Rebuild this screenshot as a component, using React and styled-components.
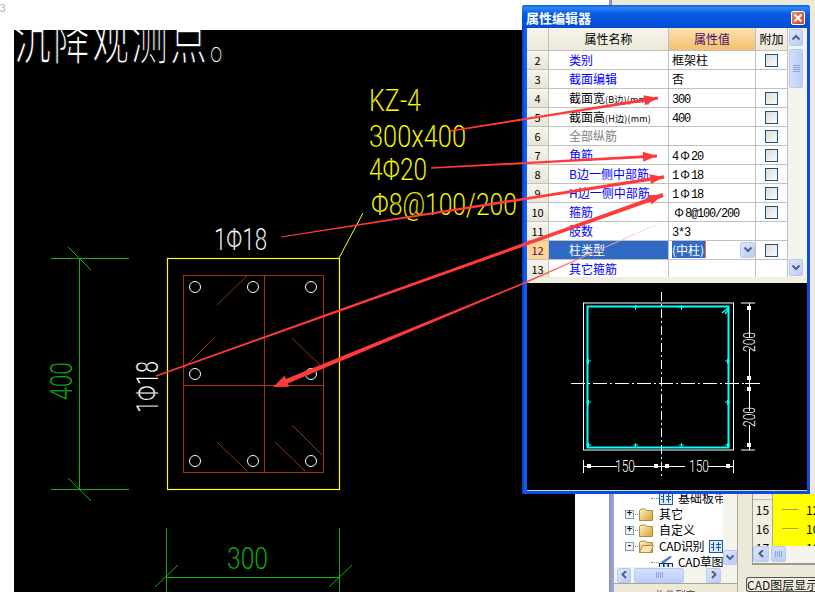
import React from 'react';
import styled, { createGlobalStyle } from 'styled-components';

const GlobalStyle = createGlobalStyle`
  html, body {
    margin: 0;
    padding: 0;
    background: #fff;
    font-family: "Noto Sans CJK SC", "Liberation Sans", sans-serif;
  }
`;

const CJK = '"Noto Sans CJK SC", "Liberation Sans", sans-serif';

const Page = styled.div`
  position: relative;
  display: flex;
  width: 815px;
  height: 592px;
  overflow: hidden;
  background: #fff;
`;

/* left: the pasted CAD picture */
const LeftPane = styled.div`
  display: flex;
  flex-direction: column;
  width: 609px;
  flex: none;
`;
const PageNumber = styled.div`
  height: 30px;
  flex: none;
  font: 10px/17px "Liberation Sans", sans-serif;
  color: #b0b0b0;
`;
const Canvas = styled.svg`
  display: block;
  width: 561px;
  height: 562px;
  margin-left: 14px;
  background: #000;
`;
const CadLabel = styled.text`
  font-family: "Roboto", "Liberation Sans", sans-serif;
  font-weight: 300;
  font-size: 32px;
  fill: ${(p) => p.$color || '#fff'};
  stroke: #000;
  stroke-width: 0.15px;
`;
const CadNote = styled.text`
  font-family: ${CJK};
  font-size: 37px;
  letter-spacing: 2px;
  fill: #fff;
  stroke: #000;
  stroke-width: 1px;
`;

/* right: the application behind the dialog */
const RightPane = styled.div`
  display: flex;
  flex-direction: column;
  flex: 1;
  background: #ece9d8;
`;
const BehindDialog = styled.div`
  display: flex;
  justify-content: flex-end;
  height: 494px;
  flex: none;
  border-left: 3px solid #8c93cd;
`;
const RightStrip = styled.div`
  display: flex;
  flex-direction: column;
  width: 5px;
  overflow: hidden;
  font: bold 11px/17px "Liberation Sans", sans-serif;
  color: #000;
`;
const StripPart = styled.div`
  height: ${(p) => p.$h}px;
  flex: none;
  overflow: hidden;
  white-space: nowrap;
  background: ${(p) => p.$bg || '#fff'};
  border-bottom: ${(p) => (p.$line ? `1px solid ${p.$line}` : 'none')};
  box-sizing: border-box;
`;
const StripLetter = styled.div`
  height: 18px;
`;
const BelowDialog = styled.div`
  display: flex;
  flex: 1;
  min-height: 0;
`;
const Sash = styled.div`
  width: 5px;
  flex: none;
  background: linear-gradient(90deg, #8c93cd, #9fa8dc);
`;
const TreeColumn = styled.div`
  display: flex;
  flex-direction: column;
  width: 124px;
  flex: none;
  border-right: 1px solid #a9a79a;
  box-sizing: border-box;
`;
const TreeBody = styled.div`
  display: grid;
  grid-template-columns: 109px 14px;
  grid-template-rows: 73px 16px;
  flex: none;
  background: #fff;
  border-bottom: 1px solid #a9a79a;
`;
const TreeList = styled.div`
  overflow: hidden;
  background: #fff;
  font: 12px/16px ${CJK};
  color: #000;
`;
const TreeRow = styled.div`
  position: relative;
  display: flex;
  align-items: center;
  gap: 5px;
  height: 16px;
  margin-top: ${(p) => (p.$first ? -4 : 0)}px;
  padding-left: ${(p) => (p.$leaf ? 45 : 11)}px;
  white-space: nowrap;

  &::before {
    content: '';
    position: absolute;
    left: ${(p) => (p.$leaf ? 37 : 15)}px;
    top: 8px;
    width: ${(p) => (p.$leaf ? 8 : 9)}px;
    border-top: 1px dotted #888;
  }
`;
const CadName = styled.span`
  letter-spacing: -0.4px;
`;
const Expander = styled.span`
  position: relative;
  z-index: 1;
  width: 7px;
  height: 7px;
  flex: none;
  border: 1px solid #7f9db9;
  background: #f4f4ee;
  font: bold 9px/7px "Liberation Mono", monospace;
  text-align: center;
  color: #000;
`;
const TreeCorner = styled.div`
  background: #f5f4ec;
  display: flex;
  flex-direction: column;
  justify-content: flex-end;
  padding-bottom: 2px;
`;
const ScrollBtn = styled.div`
  display: flex;
  align-items: center;
  justify-content: center;
  width: ${(p) => p.$w || 14}px;
  height: ${(p) => p.$h || 15}px;
  flex: none;
  box-sizing: border-box;
  border: 1px solid #b6c8f4;
  border-radius: 2px;
  background: linear-gradient(135deg, #dde6fd, #b9cbf8);
`;
const HScroll = styled.div`
  display: flex;
  align-items: center;
  gap: ${(p) => p.$gap || 3}px;
  padding-left: ${(p) => p.$pad || 0}px;
  background: #f5f4ec;
`;
const ScrollGap = styled.span`
  width: 16px;
  flex: none;
`;
const Thumb = styled.div`
  display: flex;
  align-items: center;
  justify-content: center;
  width: ${(p) => p.$w || 16}px;
  height: ${(p) => p.$h || 15}px;
  flex: none;
  box-sizing: border-box;
  border: 1px solid #b6c8f4;
  border-radius: 2px;
  background: linear-gradient(#d3e0fd, #bccdf8);
`;
const Grip = styled.span`
  width: 7px;
  height: 6px;
  background: repeating-linear-gradient(90deg, #8ba3d8 0 1px, transparent 1px 2px);
`;
const TreeFooter = styled.div`
  flex: 1;
  overflow: hidden;
  font: 10px/22px ${CJK};
  text-align: center;
  color: #444;
`;
const GridColumn = styled.div`
  display: flex;
  flex-direction: column;
  flex: 1;
  min-width: 0;
  padding-left: 8px;
`;
const SheetBox = styled.div`
  margin-left: 6px;
  height: 71px;
  flex: none;
  overflow: hidden;
  background: #f5f4ec;
  border-bottom: 2px solid #9d9b8e;
  border-left: 1px solid #9d9b8e;
  box-sizing: border-box;
`;
const SheetRows = styled.div`
  height: 52px;
  overflow: hidden;
  background: #ffff00;
`;
const SheetRow = styled.div`
  display: grid;
  grid-template-columns: 20px 9px 1fr;
  height: 19px;
  margin-top: ${(p) => (p.$first ? -13 : 0)}px;
  font: 12px/19px ${CJK};
  color: #000;
`;
const SheetNo = styled.div`
  background: #f1efe2;
  border-bottom: 1px solid #bdbdb5;
  border-right: 1px solid #a9a79a;
  text-align: center;
`;
const SheetTick = styled.div`
  position: relative;
  padding-left: 24px;
  white-space: nowrap;
  overflow: hidden;

  &::before {
    content: '';
    position: absolute;
    left: 0;
    top: 9px;
    width: 16px;
    border-top: 1px solid #a0a060;
  }
`;
const SheetCell = styled.div`
  background: #ffff00;
`;
const LayerButton = styled.div`
  margin-top: 12px;
  width: 80px;
  height: 13px;
  border: 1px solid #555;
  border-radius: 3px 0 0 3px;
  border-right: none;
  background: #f1efe2;
  font: 12px/13px ${CJK};
  white-space: nowrap;
  color: #111;
`;

/* the floating property dialog */
const Dialog = styled.div`
  position: absolute;
  left: 522px;
  top: 5px;
  display: flex;
  flex-direction: column;
  width: 288px;
  height: 489px;
  box-sizing: border-box;
  padding: 0 3px 3px 5px;
  background: linear-gradient(90deg, #0831d9 0, #166aee 4px, #0a4be0 5px, #0a4be0 100%);
  border-radius: 3px 3px 0 0;
`;
const TitleBar = styled.div`
  display: flex;
  align-items: center;
  justify-content: space-between;
  height: 23px;
  flex: none;
  margin: 0 -3px 0 -5px;
  padding: 2px 5px 0 4px;
  box-sizing: border-box;
  background: linear-gradient(#0a5be6, #2b86f5 12%, #0858e4 40%, #0350d8 90%, #0a48c8);
  border-radius: 3px 3px 0 0;
  font: bold 13px/16px ${CJK};
  color: #fff;
`;
const CloseBtn = styled.div`
  display: flex;
  align-items: center;
  justify-content: center;
  width: 14px;
  height: 14px;
  box-sizing: border-box;
  border: 1px solid #fff;
  border-radius: 2px;
  background: linear-gradient(135deg, #eb8a6e, #d2401c);
`;
const PropsPane = styled.div`
  display: flex;
  height: 255px;
  flex: none;
  box-sizing: border-box;
  padding-bottom: 6px;
  background: #f1efe2;
`;
const PropGrid = styled.div`
  display: grid;
  grid-template-columns: 22px 120px 87px 32px;
  grid-template-rows: 23px repeat(12, 19px);
  height: 249px;
  width: 261px;
  flex: none;
  overflow: hidden;
  background: #fff;
  font: 12px/18px ${CJK};
`;
const Cell = styled.div`
  position: relative;
  box-sizing: border-box;
  border-right: 1px solid #c0c0c0;
  border-bottom: 1px solid #c0c0c0;
  white-space: nowrap;
  overflow: hidden;
`;
const HeadCell = styled(Cell)`
  line-height: 22px;
  text-align: center;
  color: ${(p) => (p.$value ? '#4b0a6e' : '#000')};
  background: ${(p) =>
    p.$value ? 'linear-gradient(#fbe3ae, #f3c06e)' : 'linear-gradient(#f7f5ec, #ece9d8)'};
`;
const NumCell = styled(Cell)`
  text-align: center;
  font-size: 11px;
  color: ${(p) => (p.$active ? '#4b0a6e' : '#000')};
  background: ${(p) => (p.$active ? '#ffd58f' : 'linear-gradient(#f7f5ec, #e8e5d6)')};
`;
const NameCell = styled(Cell)`
  padding-left: 20px;
  color: ${(p) => (p.$active ? '#fff' : p.$color || '#0000ff')};
  background: ${(p) => (p.$active ? '#316ac5' : '#fff')};
`;
const ValueCell = styled(Cell)`
  padding-left: 3px;
  color: #000;
`;
const AddCell = styled(Cell)`
  display: flex;
  align-items: center;
  justify-content: center;
`;
const Small = styled.span`
  font-size: 9px;
  letter-spacing: 0.2px;
`;
const Digits = styled.span`
  font-family: "Liberation Mono", monospace;
  font-size: 12px;
  letter-spacing: -1.2px;
`;
const Steel = styled.span`
  display: inline-block;
  width: 10px;
  margin: 0 1px 0 2px;
  text-align: center;
  font-size: 12px;
`;
const Selected = styled.span`
  padding-right: 1px;
  background: #316ac5;
  border-right: 1px solid #e8821e;
  color: #fff;
`;
const CheckBox = styled.span`
  width: 13px;
  height: 13px;
  box-sizing: border-box;
  border: 1.5px solid #1c5180;
  background: linear-gradient(135deg, #dcdcd7, #fbfbf9);
`;
const CellDrop = styled(ScrollBtn)`
  position: absolute;
  right: 0;
  top: 1px;
`;
const VScroll = styled.div`
  display: flex;
  flex-direction: column;
  justify-content: space-between;
  width: 19px;
  height: 249px;
  flex: none;
  box-sizing: border-box;
  padding: 1px 4px 1px 1px;
  background: #f5f4ec;
`;
const VTrack = styled.div`
  display: flex;
  flex-direction: column;
  gap: 3px;
`;
const VThumb = styled(Thumb)`
  width: 14px;
  height: 39px;
  background: linear-gradient(90deg, #d3e0fd, #bccdf8);
`;
const VGrip = styled.span`
  width: 7px;
  height: 7px;
  background: repeating-linear-gradient(#8ba3d8 0 1px, transparent 1px 2px);
`;
const Preview = styled.svg`
  display: block;
  width: 280px;
  height: 207px;
  flex: none;
  background: #000;
`;
const DialogEdge = styled.div`
  height: 1px;
  flex: none;
  background: #d8d4c6;
`;
const DimLabel = styled.text`
  font-family: "Roboto", "Liberation Sans", sans-serif;
  font-weight: 300;
  font-size: 16px;
  fill: #fff;
`;

const Overlay = styled.svg`
  position: absolute;
  left: 0;
  top: 0;
  width: 815px;
  height: 592px;
  pointer-events: none;
`;

const Chevron = ({ dir = 'down' }) => {
  const rot = { down: 0, up: 180, left: 90, right: -90 }[dir];
  return (
    <svg width="10" height="8" viewBox="0 0 10 8">
      <path
        d="M1.5 1.5 5 5l3.5-3.5"
        fill="none"
        stroke="#4d6185"
        strokeWidth="2"
        transform={`rotate(${rot} 5 3.5)`}
      />
    </svg>
  );
};

const CloseGlyph = () => (
  <svg width="10" height="10" viewBox="0 0 10 10">
    <path d="M1.5 1.5l7 7M8.5 1.5l-7 7" stroke="#fff" strokeWidth="2.2" />
  </svg>
);

const Folder = ({ open }) => (
  <svg width="15" height="13" viewBox="0 0 15 13" style={{ flex: 'none' }}>
    <defs>
      <linearGradient id="folderFill" x1="0" y1="0" x2="1" y2="1">
        <stop offset="0" stopColor="#fff3c4" />
        <stop offset="1" stopColor="#d8a02c" />
      </linearGradient>
    </defs>
    <path d="M.5 2.5 2 1h4l1.5 1.5h6v10H.5z" fill="url(#folderFill)" stroke="#a88a50" />
    {open && <path d="M.5 12.5 3.5 5.5h11l-3 7z" fill="#fbe6a8" stroke="#a88a50" />}
  </svg>
);

const BlueBoard = ({ w = 14, h = 13 }) => (
  <svg width={w} height={h} viewBox="0 0 14 13" style={{ flex: 'none' }}>
    <rect x=".5" y=".5" width="13" height="12" fill="#dbe8f8" stroke="#1c5a9c" />
    <path d="M4.5 2v9M9.5 2v9M2 4.5h2.5M2 7.5h2.5M7 4.5h5M7 7.5h5" stroke="#1c5a9c" />
  </svg>
);

const CadSketchIcon = () => (
  <svg width="14" height="12" viewBox="0 0 14 12" style={{ flex: 'none' }}>
    <path d="M2 6 11 0l2 1-9 7z" fill="#3f78c8" />
    <path d="M0 7h14v5H0z" fill="#12305c" />
    <path d="M1 8h3v3H1zM5.500 8h3v3h-3zM10 8h3v3h-3z" fill="#dbe8f8" />
  </svg>
);

const rows = [
  { no: 2, name: '类别', value: '框架柱', check: true },
  { no: 3, name: '截面编辑', value: '否' },
  { no: 4, name: <>截面宽<Small>(B边)(mm)</Small></>, color: '#000', value: <Digits>300</Digits>, check: true },
  { no: 5, name: <>截面高<Small>(H边)(mm)</Small></>, color: '#000', value: <Digits>400</Digits>, check: true },
  { no: 6, name: '全部纵筋', color: '#808080', value: '', check: true },
  { no: 7, name: '角筋', value: <><Digits>4</Digits><Steel>Φ</Steel><Digits>20</Digits></>, check: true },
  { no: 8, name: 'B边一侧中部筋', value: <><Digits>1</Digits><Steel>Φ</Steel><Digits>18</Digits></>, check: true },
  { no: 9, name: 'H边一侧中部筋', value: <><Digits>1</Digits><Steel>Φ</Steel><Digits>18</Digits></>, check: true },
  { no: 10, name: '箍筋', value: <><Steel>Φ</Steel><Digits>8@100/200</Digits></>, check: true },
  { no: 11, name: '肢数', value: <Digits>3*3</Digits> },
  { no: 12, name: '柱类型', active: true, value: <Selected>(中柱)</Selected>, check: true },
  { no: 13, name: '其它箍筋', value: '' },
];

const taper = (x1, y1, x2, y2, w1, w2) => {
  const len = Math.hypot(x2 - x1, y2 - y1);
  const nx = -(y2 - y1) / len;
  const ny = (x2 - x1) / len;
  return [
    [x1 + (nx * w1) / 2, y1 + (ny * w1) / 2],
    [x2 + (nx * w2) / 2, y2 + (ny * w2) / 2],
    [x2 - (nx * w2) / 2, y2 - (ny * w2) / 2],
    [x1 - (nx * w1) / 2, y1 - (ny * w1) / 2],
  ]
    .map((p) => p.join(','))
    .join(' ');
};

const head = (tx, ty, fx, fy, len = 14, half = 5) => {
  const d = Math.hypot(fx - tx, fy - ty);
  const ux = (fx - tx) / d;
  const uy = (fy - ty) / d;
  const bx = tx + ux * len;
  const by = ty + uy * len;
  return `${tx},${ty} ${bx - uy * half},${by + ux * half} ${bx + uy * half},${by - ux * half}`;
};

const arrows = [
  { from: [450, 131], to: [658, 98], w1: 1.5, w2: 3 },
  { from: [431, 168], to: [657, 156], w1: 1.5, w2: 3 },
  { from: [281, 237], to: [664, 177], w1: 1.2, w2: 3.5 },
  { from: [156, 376], to: [663, 195], w1: 1.5, w2: 4 },
];

const rebarDots = [
  [195, 287], [253, 287], [311, 287], [195, 374],
  [311, 374], [195, 461], [253, 461], [311, 461],
];
const stirrupTicks = [
  [247, 276, 217, 305], [214, 338, 184, 368], [292, 338, 322, 367],
  [217, 442, 247, 471], [275, 442, 305, 471], [292, 425, 322, 455],
];
const cyanTicks = [
  [635, 307], [681, 307], [588, 361], [588, 402], [727, 361], [727, 402],
  [635, 445], [681, 445], [727, 445], [588, 445],
];
const dimSquares = [
  [589, 466], [656, 466], [667, 466], [728, 466],
  [749, 308], [749, 378], [749, 389], [749, 445],
];
const GREEN = '#10b010';
const YELLOW = '#ffff00';

const DrawingCanvas = () => (
  <Canvas viewBox="14 30 561 562">
    <CadNote transform="translate(14 59) scale(1 1.5)">沉降观测点。</CadNote>
    <CadLabel x="369" y="111" $color={YELLOW} textLength="52" lengthAdjust="spacingAndGlyphs">KZ-4</CadLabel>
    <CadLabel x="369" y="147" $color={YELLOW} textLength="97" lengthAdjust="spacingAndGlyphs">300x400</CadLabel>
    <CadLabel x="369" y="180" $color={YELLOW} textLength="58" lengthAdjust="spacingAndGlyphs">4Φ20</CadLabel>
    <CadLabel x="371" y="215" $color={YELLOW} textLength="146" lengthAdjust="spacingAndGlyphs">Φ8@100/200</CadLabel>
    <CadLabel x="214" y="250" textLength="53" lengthAdjust="spacingAndGlyphs">1Φ18</CadLabel>
    <CadLabel x="0" y="0" transform="translate(158 413) rotate(-90)" textLength="52" lengthAdjust="spacingAndGlyphs">1Φ18</CadLabel>
    <CadLabel x="0" y="0" transform="translate(72 400) rotate(-90)" $color={GREEN} textLength="38" lengthAdjust="spacingAndGlyphs">400</CadLabel>
    <CadLabel x="227" y="569" $color={GREEN} textLength="41" lengthAdjust="spacingAndGlyphs">300</CadLabel>

    <rect x="167.500" y="258.500" width="172" height="231" fill="none" stroke={YELLOW} strokeWidth="1.200" />
    <path d="M339 258 363 213" stroke={YELLOW} fill="none" />
    <rect x="183.500" y="275.500" width="140" height="197" fill="none" stroke="#a83200" />
    <path d="M264.500 275v197M183 385.500h140" stroke="#a83200" fill="none" />
    {stirrupTicks.map(([a, b, c, d]) => (
      <line key={`${a}-${b}`} x1={a} y1={b} x2={c} y2={d} stroke="#8e3a00" />
    ))}
    {rebarDots.map(([cx, cy]) => (
      <circle key={`${cx}-${cy}`} cx={cx} cy={cy} r="5.500" fill="none" stroke="#fff" />
    ))}

    <g stroke={GREEN} fill="none">
      <path d="M79.500 258v231M51 258.500h78M51 489.500h78M68 247l23 23M68 478l23 23" />
      <path d="M166.500 528v64M339.500 528v64M166 577.500h173M155 587l23-22M329 587l23-22" />
    </g>
  </Canvas>
);

const SectionPreview = () => (
  <Preview viewBox="527 283 280 207">
    <rect x="583.500" y="303" width="150" height="147" fill="none" stroke="#fff" />
    <rect x="587.500" y="306.500" width="141" height="141" fill="none" stroke="#00ffff" strokeWidth="2" />
    <path d="M722 313l6-5M725 314l4-5" stroke="#00ffff" strokeWidth="1.500" />
    {cyanTicks.map(([x, y]) => (
      <path key={`${x}-${y}`} d={`M${x - 2} ${y}h5M${x + 0.5} ${y - 2}v5`} stroke="#00ffff" />
    ))}
    <g stroke="#fff" fill="none">
      <path d="M661.500 292V479" strokeDasharray="9 3 2 3" />
      <path d="M571 383.500H760" strokeDasharray="14 3 2 3" />
      <path d="M749.500 303v34M749.500 349v62M749.500 425v25M741 303h14M741 450h14M745 383.500h9" />
      <path d="M583.500 460v13M733.500 460v13M583 466.500h34M634 466.500h51M708 466.500h26" />
    </g>
    {dimSquares.map(([x, y]) => (
      <rect key={`${x}-${y}`} x={x - 2} y={y - 2} width="4" height="4" fill="#fff" />
    ))}
    <DimLabel x="615" y="472" textLength="20" lengthAdjust="spacingAndGlyphs">150</DimLabel>
    <DimLabel x="689" y="472" textLength="20" lengthAdjust="spacingAndGlyphs">150</DimLabel>
    <DimLabel transform="translate(755 352) rotate(-90)" textLength="20" lengthAdjust="spacingAndGlyphs">200</DimLabel>
    <DimLabel transform="translate(755 427) rotate(-90)" textLength="20" lengthAdjust="spacingAndGlyphs">200</DimLabel>
  </Preview>
);

const PropertyDialog = () => (
  <Dialog>
    <TitleBar>
      属性编辑器
      <CloseBtn><CloseGlyph /></CloseBtn>
    </TitleBar>
    <PropsPane>
      <PropGrid>
        <HeadCell />
        <HeadCell>属性名称</HeadCell>
        <HeadCell $value>属性值</HeadCell>
        <HeadCell>附加</HeadCell>
        {rows.map((r) => (
          <React.Fragment key={r.no}>
            <NumCell $active={r.active}>{r.no}</NumCell>
            <NameCell $active={r.active} $color={r.color}>{r.name}</NameCell>
            <ValueCell>
              {r.value}
              {r.active && <CellDrop $w={15} $h={16}><Chevron /></CellDrop>}
            </ValueCell>
            <AddCell>{r.check && <CheckBox />}</AddCell>
          </React.Fragment>
        ))}
      </PropGrid>
      <VScroll>
        <VTrack>
          <ScrollBtn $h={17}><Chevron dir="up" /></ScrollBtn>
          <VThumb><VGrip /></VThumb>
        </VTrack>
        <ScrollBtn $h={17}><Chevron /></ScrollBtn>
      </VScroll>
    </PropsPane>
    <SectionPreview />
    <DialogEdge />
  </Dialog>
);

const BackgroundStrip = () => (
  <RightStrip>
    <StripPart $h={33} $bg="#ece9d8" $line="#a9a79a" />
    <StripPart $h={43} $line="#a9a79a">✕</StripPart>
    <StripPart $h={22} $bg="#ece9d8" />
    <StripPart $h={3} $bg="#8ba3c8" />
    <StripPart $h={171}>
      <StripLetter>三</StripLetter>
      {Array.from({ length: 9 }).map((_, i) => <StripLetter key={i}>K</StripLetter>)}
    </StripPart>
    <StripPart $h={2} $bg="#e8a040" />
    <StripPart $h={46} $line="#a9a79a">
      <div>|</div>
      <div>▾</div>
    </StripPart>
    <StripPart $h={27} $bg="linear-gradient(#f6d8b8, #f0b888)" />
    {['口', 'M', 'M', '装', '', '图', '', '国'].map((t, i) => (
      <StripPart key={i} $h={19} $bg="#ffff00" $line="#b8b8a8">{t}</StripPart>
    ))}
  </RightStrip>
);

const ProjectTree = () => (
  <TreeColumn>
    <TreeBody>
      <TreeList>
        <TreeRow $leaf $first><BlueBoard /><span>基础板带</span></TreeRow>
        <TreeRow><Expander>+</Expander><Folder /><span>其它</span></TreeRow>
        <TreeRow><Expander>+</Expander><Folder /><span>自定义</span></TreeRow>
        <TreeRow>
          <Expander>-</Expander><Folder open /><CadName>CAD识别</CadName><BlueBoard />
        </TreeRow>
        <TreeRow $leaf><CadSketchIcon /><CadName>CAD草图</CadName></TreeRow>
      </TreeList>
      <TreeCorner>
        <ScrollBtn $h={15}><Chevron /></ScrollBtn>
      </TreeCorner>
      <HScroll $pad={3} $gap={3}>
        <ScrollBtn><Chevron dir="left" /></ScrollBtn>
        <Thumb $w={50}><Grip /></Thumb>
        <ScrollGap />
        <ScrollBtn $w={15}><Chevron dir="right" /></ScrollBtn>
      </HScroll>
      <TreeCorner />
    </TreeBody>
    <TreeFooter>构件列表</TreeFooter>
  </TreeColumn>
);

const LayerSheet = () => (
  <GridColumn>
    <SheetBox>
      <SheetRows>
        <SheetRow $first><SheetNo /><SheetCell /><SheetCell /></SheetRow>
        <SheetRow><SheetNo>15</SheetNo><SheetCell /><SheetTick>12</SheetTick></SheetRow>
        <SheetRow><SheetNo>16</SheetNo><SheetCell /><SheetTick>10</SheetTick></SheetRow>
        <SheetRow><SheetNo>17</SheetNo><SheetCell /><SheetTick>10</SheetTick></SheetRow>
      </SheetRows>
      <HScroll $gap={2}>
        <ScrollBtn $w={16} $h={16}><Chevron dir="left" /></ScrollBtn>
        <Thumb $w={15} $h={16}><Grip /></Thumb>
      </HScroll>
    </SheetBox>
    <LayerButton>CAD图层显示</LayerButton>
  </GridColumn>
);

const Arrows = () => (
  <Overlay viewBox="0 0 815 592">
    <defs>
      <linearGradient id="fadeTail" gradientUnits="userSpaceOnUse" x1="520" y1="285" x2="660" y2="223">
        <stop offset="0" stopColor="#ff3a3a" />
        <stop offset="1" stopColor="#ffdada" />
      </linearGradient>
    </defs>
    {arrows.map(({ from, to, w1, w2 }) => (
      <g key={from.join()} fill="#ff3a3a">
        <polygon points={taper(from[0], from[1], to[0], to[1], w1, w2)} />
        <polygon points={head(to[0], to[1], from[0], from[1])} />
      </g>
    ))}
    <polygon points={taper(285, 382, 522, 284, 5, 1.5)} fill="#ff3a3a" />
    <polygon points={head(273, 387, 522, 284, 15, 6)} fill="#ff3a3a" />
    <polygon points={taper(522, 284, 660, 223, 1.5, 0.5)} fill="url(#fadeTail)" />
  </Overlay>
);

const App = () => (
  <Page>
    <GlobalStyle />
    <LeftPane>
      <PageNumber>3</PageNumber>
      <DrawingCanvas />
    </LeftPane>
    <RightPane>
      <BehindDialog><BackgroundStrip /></BehindDialog>
      <BelowDialog>
        <Sash />
        <ProjectTree />
        <LayerSheet />
      </BelowDialog>
    </RightPane>
    <PropertyDialog />
    <Arrows />
  </Page>
);

export default App;
